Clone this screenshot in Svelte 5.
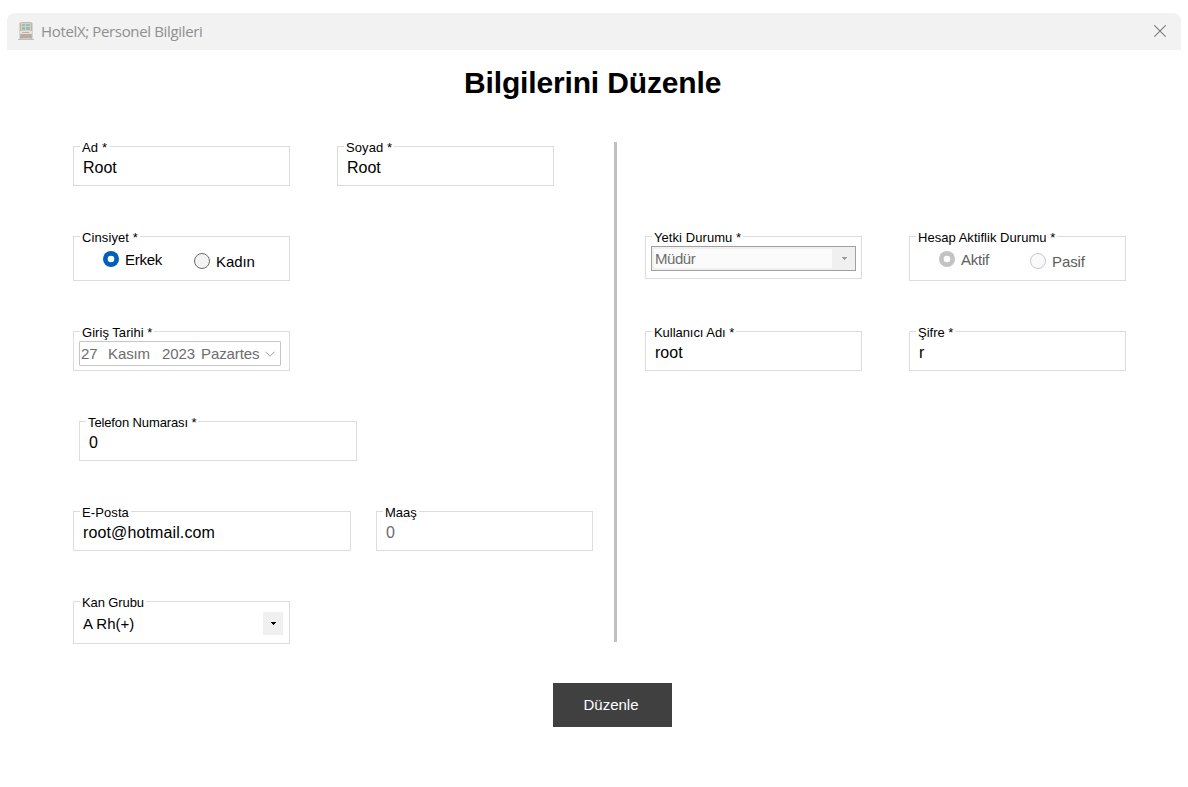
<script>
  let gender = $state('Erkek');
</script>

{#snippet box(label, w, h, gap, spacing, body)}
  <div class="box" style:width="{w}px" style:height="{h}px">
    <span class="legend" style:width="{gap}px" style:letter-spacing="{spacing}px">{label}</span>
    {@render body()}
  </div>
{/snippet}

{#snippet radio(label, on, disabled)}
  <span class="radio" class:low={!on} class:disabled>
    <svg width="16" height="16" viewBox="0 0 16 16">
      {#if on}
        <circle cx="8" cy="8" r="8" fill={disabled ? '#c3c3c3' : '#005fb8'} />
        <circle cx="8" cy="8" r="3.3" fill="#fff" />
      {:else}
        <circle cx="8" cy="8" r="7.5" fill={disabled ? '#fafafa' : '#f3f3f3'} stroke={disabled ? '#c8c8c8' : '#6b6b6b'} />
      {/if}
    </svg>
    <span>{label}</span>
  </span>
{/snippet}

{#snippet root()}<span class="value">Root</span>{/snippet}
{#snippet genderBody()}
  <div class="radios">
    {@render radio('Erkek', gender === 'Erkek', false)}
    {@render radio('Kadın', gender === 'Kadın', false)}
  </div>
{/snippet}
{#snippet dateBody()}
  <div class="date">
    <span class="day">27</span><span class="month">Kasım</span><span class="year">2023</span><span class="weekday">Pazartes</span>
    <svg width="10" height="6" viewBox="0 0 10 6"><path d="M.5.7 5 5.2 9.500.7" fill="none" stroke="#a0a0a0" /></svg>
  </div>
{/snippet}
{#snippet phone()}<span class="value">0</span>{/snippet}
{#snippet mail()}<span class="value email">root@hotmail.com</span>{/snippet}
{#snippet salary()}<span class="value gray">0</span>{/snippet}
{#snippet blood()}
  <div class="blood">
    <span>A Rh(+)</span>
    <i><svg width="5" height="3" viewBox="0 0 5 3"><path d="M0 0h5v1H4v1H3v1H2V2H1V1H0z" fill="#000" /></svg></i>
  </div>
{/snippet}
{#snippet role()}
  <div class="role">
    <span>Müdür</span>
    <i><svg width="5" height="3" viewBox="0 0 5 3"><path d="M0 0h5v1H4v1H3v1H2V2H1V1H0z" fill="#999" /></svg></i>
  </div>
{/snippet}
{#snippet active()}
  <div class="radios">
    {@render radio('Aktif', true, true)}
    {@render radio('Pasif', false, true)}
  </div>
{/snippet}
{#snippet user()}<span class="value">root</span>{/snippet}
{#snippet pass()}<span class="value">r</span>{/snippet}

<div class="window">
  <header>
    <svg class="logo" width="16" height="18" viewBox="0 0 16 18">
      <path d="M2 0h12v17H2z" fill="#d6ccbe" />
      <path d="M1.500 1h1.500v16H1.500zM13 1h1.500v16H13z" fill="#bbb0a4" />
      <path d="M3 0h10v1H3z" fill="#aebcb8" />
      <path d="M4 2h3v2H4zM8 2h4v2H8zM4 5h3v3H4zM8 5h4v3H8z" fill="#8fb8b6" />
      <path d="M2 9h12v3H2z" fill="#eaded3" />
      <path d="M4 10h7v1H4z" fill="#e09a94" />
      <path d="M3 12h10v4H3z" fill="#9fada9" />
      <path d="M3 14h2v2H3zM7 15h2v1H7zM12 14h1v2h-1z" fill="#cf8a80" />
      <path d="M0 17h16v1H0z" fill="#b9b8b3" />
    </svg>
    <span class="title">HotelX; Personel Bilgileri</span>
    <svg class="close" width="12" height="12" viewBox="0 0 12 12"><path d="M.3.3l11.400 11.400M11.700.3.3 11.700" stroke="#7c7c7c" stroke-width="1.1" fill="none" /></svg>
  </header>
  <h1>Bilgilerini Düzenle</h1>
  <main>
    <section class="left">
      <div class="row pair">
        {@render box('Ad *', 217, 40, 29, 0.2, root)}
        {@render box('Soyad *', 217, 40, 50, 0.1, root)}
      </div>
      <div class="row tall">{@render box('Cinsiyet *', 217, 45, 60, 0.1, genderBody)}</div>
      <div class="row">{@render box('Giriş Tarihi *', 217, 40, 74, 0.04, dateBody)}</div>
      <div class="row phone">{@render box('Telefon Numarası *', 278, 40, 112, -0.12, phone)}</div>
      <div class="row mail">
        {@render box('E-Posta', 278, 40, 51, 0.1, mail)}
        {@render box('Maaş', 217, 40, 36, 0, salary)}
      </div>
      <div class="row">{@render box('Kan Grubu', 217, 43, 66, -0.1, blood)}</div>
    </section>
    <div class="divider"></div>
    <section class="right">
      <div class="row tall pair">
        {@render box('Yetki Durumu *', 217, 43, 91, 0.07, role)}
        {@render box('Hesap Aktiflik Durumu *', 217, 45, 141, 0.03, active)}
      </div>
      <div class="row pair">
        {@render box('Kullanıcı Adı *', 217, 40, 84, -0.05, user)}
        {@render box('Şifre *', 217, 40, 39, 0, pass)}
      </div>
    </section>
  </main>
  <button type="button">Düzenle</button>
</div>

<style>
  :global(body) { background: #fff; }
  .window { height: 787px; box-sizing: border-box; padding: 13px 7px 0; overflow: hidden; font-family: 'Liberation Sans', Arial, sans-serif; color: #000; white-space: nowrap; }
  header { box-sizing: border-box; height: 37px; background: #f2f2f2; border-radius: 8px 8px 0 0; display: flex; align-items: center; padding: 0 15px 2px 11px; }
  .logo { margin-right: 7px; opacity: .9; }
  .title { font: 15px/20px 'Open Sans', 'Noto Sans', sans-serif; letter-spacing: -.35px; color: #8f8f8f; flex: 1; }
  h1 { margin: 13px 0 0 457px; font-size: 30px; letter-spacing: -.15px; line-height: 40px; height: 40px; font-weight: bold; }
  main { display: flex; height: 500px; margin-top: 39px; padding-left: 66px; }
  section { padding-top: 4px; }
  .left { width: 541px; }
  .divider { width: 3px; background: #c0c0c0; }
  .right { padding: 94px 0 0 28px; }
  .row { display: flex; align-items: flex-start; height: 90px; }
  .row.tall { height: 95px; }
  .pair { gap: 47px; }
  .mail { gap: 25px; }
  .row.phone { padding-left: 6px; }
  .box { box-sizing: border-box; border: 1px solid #dcdcdc; position: relative; }
  .legend { position: absolute; left: 6px; top: -7px; height: 16px; box-sizing: border-box; padding-left: 2px; background: #fff; font-size: 13px; line-height: 16px; }
  .value { display: block; padding: 11px 0 0 9px; font-size: 16px; line-height: 20px; }
  .email { letter-spacing: .12px; }
  .gray { color: #6d6d6d; }
  .radios { display: flex; padding: 14px 0 0 29px; font-size: 15px; line-height: 17px; letter-spacing: -.25px; }
  .radio { display: flex; width: 91px; gap: 6px; }
  .radio.low { padding-top: 2px; letter-spacing: -.1px; }
  .radio svg { flex: none; }
  .disabled { color: #5d5d5d; }
  .date { box-sizing: border-box; width: 202px; height: 25px; margin: 9px 0 0 5px; border: 1px solid #c6c6c6; border-radius: 1px; display: flex; align-items: center; font-size: 15px; letter-spacing: -.1px; color: #6d6d6d; padding-left: 1px; }
  .day { width: 27px; }
  .month { width: 54px; }
  .year { width: 39px; }
  .weekday { width: 64px; }
  .blood, .role { display: flex; align-items: center; justify-content: space-between; font-size: 15px; }
  .blood { padding: 10px 6px 0 9px; }
  .blood i { width: 20px; height: 23px; background: #f0f0f0; }
  i { display: flex; align-items: center; justify-content: center; }
  .role { box-sizing: border-box; width: 205px; height: 25px; margin: 9px 0 0 5px; border: 1px solid #a0a0a0; background: #f0f0f0; color: #6d6d6d; padding: 2px; }
  .role span { width: 178px; height: 19px; line-height: 20px; background: #fbfbfb; padding-left: 1px; box-sizing: border-box; letter-spacing: -.45px; }
  .role i { width: 17px; padding-left: 1px; }
  button { display: block; width: 119px; height: 44px; margin: 41px 0 0 546px; padding: 0 3px 2px 0; border: 0; background: #404040; color: #fff; font: 15px 'Liberation Sans', Arial, sans-serif; }
</style>
